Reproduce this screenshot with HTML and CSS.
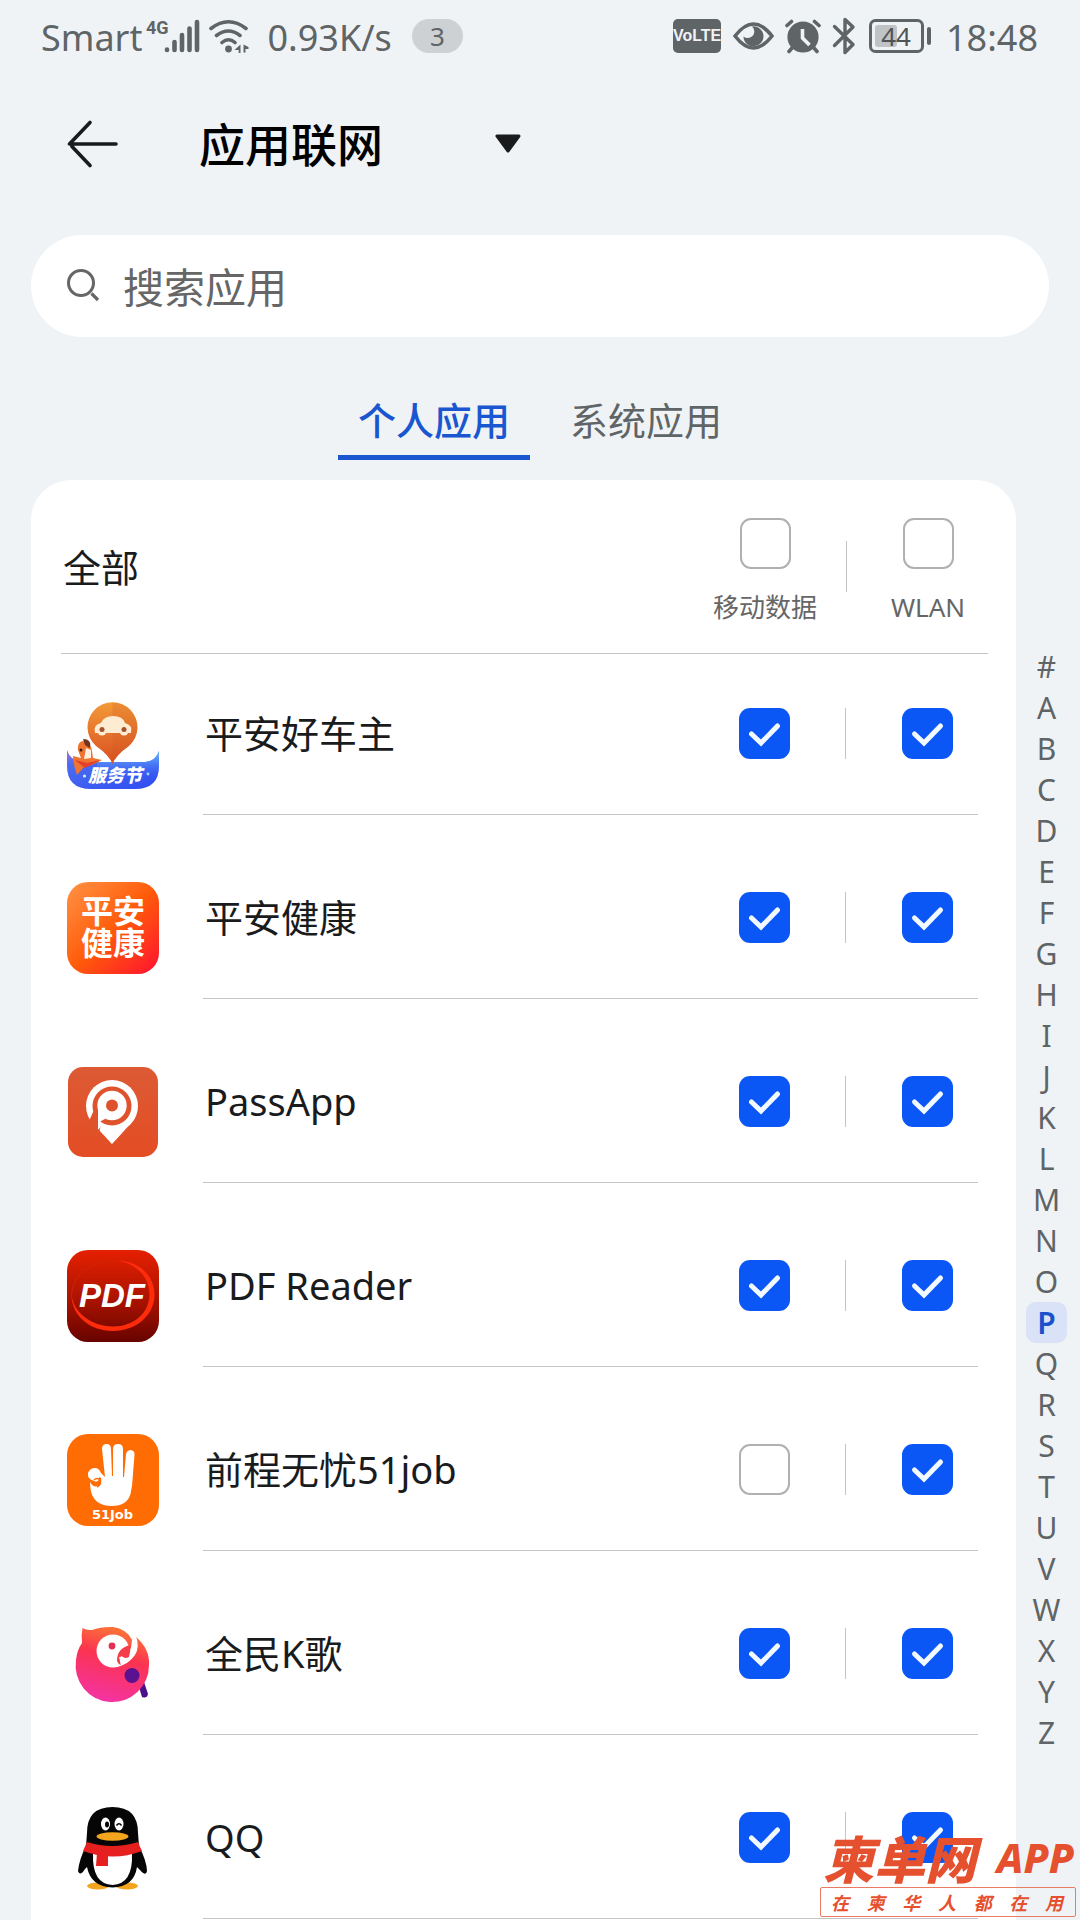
FILE: index.html
```html
<!DOCTYPE html>
<html lang="zh-CN">
<head>
<meta charset="utf-8">
<meta name="viewport" content="width=device-width, initial-scale=1">
<title>应用联网</title>
<link rel="stylesheet" href="styles.css">
</head>
<body>
<div class="page">
  <div class="status">
    <span class="carrier">Smart</span>
    <svg class="signal" width="54" height="36" viewBox="0 0 54 36" aria-hidden="true">
      <text x="0" y="16" class="net-type">4G</text>
      <g stroke="#5f6466" stroke-width="4.6" stroke-linecap="round">
        <path d="M21 31.5v0.4M28.500 24v8M36 17v15M43.500 10.500v21.500M51 4v28"/>
      </g>
    </svg>
    <svg class="wifi" width="40" height="36" viewBox="0 0 40 36" aria-hidden="true">
      <g fill="none" stroke="#5f6466" stroke-width="3.6" stroke-linecap="round">
        <path d="M2 10.500Q19.500-3 37 10.500M7.500 17.500Q19.500 8.500 31 17.500M13 24.500Q19.500 19 26 24.500"/>
      </g>
      <circle cx="19.500" cy="31" r="3.400" fill="#5f6466"/>
      <path d="M31.500 26.500v8.500h-1.800v-3h-4.200zM34.500 34.500v-8l5 2.500v2h-3v3.500z" fill="#5f6466"/>
    </svg>
    <span class="speed">0.93K/s</span>
    <span class="count">3</span>
    <span class="spacer"></span>
    <span class="volte">VoLTE</span>
    <svg class="eye" width="41" height="34" viewBox="0 0 41 34" aria-hidden="true">
      <path d="M2 17Q20.500-7 39 17Q20.500 41 2 17Z" fill="none" stroke="#5f6466" stroke-width="3.600"/>
      <path d="M19 7.500a10 10 0 1 1-8.500 10a5 5 0 1 0 8.500-10z" fill="#5f6466"/>
    </svg>
    <svg class="alarm" width="36" height="36" viewBox="0 0 36 36" aria-hidden="true">
      <circle cx="18" cy="19" r="15.600" fill="#5f6466"/>
      <path d="M2 7.500L6.500 3.500M34 7.500L29.500 3.500M7 30l-3 3.500M29 30l3 3.500" stroke="#5f6466" stroke-width="3.600" stroke-linecap="round"/>
      <path d="M17.500 11v9l7 7" fill="none" stroke="#eff3f6" stroke-width="3.600"/>
    </svg>
    <svg class="bluetooth" width="24" height="38" viewBox="0 0 24 38" aria-hidden="true">
      <path d="M2.500 9.500L21 27.500L13 35.500V2.500L21 10L2.500 28.500" fill="none" stroke="#5f6466" stroke-width="3.400" stroke-linecap="round" stroke-linejoin="round"/>
    </svg>
    <svg class="battery" width="63" height="34" viewBox="0 0 63 34" aria-hidden="true">
      <rect x="1.500" y="1.500" width="52" height="31" rx="5" fill="none" stroke="#5f6466" stroke-width="3"/>
      <rect x="6" y="6" width="22" height="22" rx="3" fill="#bfc3c5"/>
      <rect x="58" y="8" width="4" height="18" rx="2" fill="#5f6466"/>
      <text x="27" y="26.500" class="level">44</text>
    </svg>
    <span class="clock">18:48</span>
  </div>

  <header class="topbar">
    <button class="back" type="button" aria-label="返回">
      <svg width="52" height="48" viewBox="0 0 52 48" aria-hidden="true">
        <path d="M23 2.500L2.500 24H49M5 26.500L23 45.500" fill="none" stroke="#191b1c" stroke-width="3.600" stroke-linecap="round" stroke-linejoin="round"/>
      </svg>
    </button>
    <label class="picker">
      <select class="picker-select" aria-label="页面"><option>应用联网</option></select>
      <svg class="picker-arrow" width="26" height="20" viewBox="0 0 26 20" aria-hidden="true">
        <path d="M2 2H24L13 17Z" fill="#191b1c" stroke="#191b1c" stroke-width="3" stroke-linejoin="round"/>
      </svg>
    </label>
  </header>

  <label class="search">
    <svg width="36" height="36" viewBox="0 0 36 36" aria-hidden="true">
      <circle cx="15" cy="15" r="12.500" fill="none" stroke="#666" stroke-width="3"/>
      <path d="M25.500 25.500L32 32" stroke="#666" stroke-width="3.200"/>
    </svg>
    <input class="search-input" type="search" placeholder="搜索应用" aria-label="搜索应用">
  </label>

  <nav class="tabs">
    <a class="tab tab-on" href="#personal" aria-current="page">个人应用</a>
    <a class="tab" href="#system">系统应用</a>
  </nav>

  <main class="content">
    <section class="card" id="personal">
      <div class="card-head">
        <h2 class="all">全部</h2>
        <label class="all-pick"><input class="box" type="checkbox">移动数据</label>
        <span class="rule"></span>
        <label class="all-pick"><input class="box" type="checkbox">WLAN</label>
      </div>
      <ul class="apps">
        <li class="app">
          <svg class="app-icon" viewBox="0 0 92 92" aria-hidden="true">
            <defs>
              <linearGradient id="pin" x1="0" y1="0" x2="0" y2="1"><stop offset="0" stop-color="#f39a38"/><stop offset="1" stop-color="#d94f22"/></linearGradient>
              <linearGradient id="banner" x1="0" y1="0" x2="1" y2="1"><stop offset="0" stop-color="#b06bd8"/><stop offset=".2" stop-color="#4b6cf0"/><stop offset="1" stop-color="#2e4cf2"/></linearGradient>
              <linearGradient id="shine" x1="0" y1="0" x2="0" y2="1"><stop offset="0" stop-color="#6fc0fb"/><stop offset=".7" stop-color="#3f6ff5" stop-opacity="0"/></linearGradient>
            </defs>
            <path d="M0 52Q3 62 14 64H78Q89 63 92 53V68Q92 91 68 91H24Q0 91 0 68Z" fill="url(#banner)"/>
            <path d="M30 64H78Q89 63 92 53V68Q92 91 68 91H30Z" fill="url(#shine)"/>
            <path d="M45.500 66Q42 57 29 48A25 25 0 1 1 62 48Q49 57 45.500 66Z" fill="url(#pin)"/>
            <path d="M45.500 4.500a25 25 0 0 1 16.500 43.500Q49 57 45.500 66Z" fill="#c94e20" opacity=".18"/>
            <path d="M28 34Q26 27 34 25Q37 18 46 18Q56 18 58 25Q66 27 64 35H28Z" fill="#fdebd2"/>
            <circle cx="35" cy="33" r="4.500" fill="#fdebd2"/><circle cx="57" cy="33" r="4.500" fill="#fdebd2"/>
            <circle cx="35" cy="31.500" r="2.500" fill="#a5512e"/><circle cx="57" cy="31.500" r="2.500" fill="#a5512e"/>
            <path d="M10 77Q6 66 6 58L14 60L11 52Q10 44 16 43Q24 44 25 53L26 60L35 62Q24 68 17 69Z" fill="#ee7430"/>
            <path d="M16 41Q25 41 23 50L18 47Z" fill="#71341f"/>
            <path d="M19 50L24 52L24 60L17 61Z" fill="#fff0e2"/>
            <circle cx="14" cy="52" r="1.500" fill="#3d1f18"/>
            <path d="M8 62L20 65L34 62L18 70Z" fill="#e43e2e"/>
            <text x="48" y="84" text-anchor="middle" class="ic-banner">服务节</text>
            <circle cx="17.500" cy="78" r="1.600" fill="#c5f3ee"/><circle cx="81" cy="76" r="1.400" fill="#9ad8ff"/>
          </svg>
          <div class="app-body"><span class="app-name">平安好车主</span><span class="pick"><input class="box" type="checkbox" checked aria-label="平安好车主 移动数据"></span><span class="rule"></span><span class="pick"><input class="box" type="checkbox" checked aria-label="平安好车主 WLAN"></span></div>
        </li>
        <li class="app">
          <svg class="app-icon" viewBox="0 0 92 92" aria-hidden="true">
            <defs><linearGradient id="health" x1="0" y1="0" x2="1" y2="1"><stop offset="0" stop-color="#ff9345"/><stop offset=".5" stop-color="#ff5c0a"/><stop offset="1" stop-color="#ff1130"/></linearGradient></defs>
            <rect width="92" height="92" rx="21" fill="url(#health)"/>
            <text x="46" y="41" text-anchor="middle" class="ic-health">平安</text>
            <text x="46" y="73" text-anchor="middle" class="ic-health">健康</text>
          </svg>
          <div class="app-body"><span class="app-name">平安健康</span><span class="pick"><input class="box" type="checkbox" checked aria-label="平安健康 移动数据"></span><span class="rule"></span><span class="pick"><input class="box" type="checkbox" checked aria-label="平安健康 WLAN"></span></div>
        </li>
        <li class="app">
          <svg class="app-icon" viewBox="0 0 92 92" aria-hidden="true">
            <defs><linearGradient id="pass" x1="0" y1="0" x2="0" y2="1"><stop offset="0" stop-color="#dc5a34"/><stop offset="1" stop-color="#e44d24"/></linearGradient></defs>
            <rect x="1" y="1" width="90" height="90" rx="15" fill="url(#pass)"/>
            <circle cx="45" cy="40" r="26" fill="#fff"/>
            <path d="M24.500 56L45 78Q60 62 68 52Z" fill="#fff"/>
            <circle cx="45" cy="40" r="19.500" fill="#df532c"/>
            <path d="M22 55L27 44L31 50V64Q33 62 34 60L30 72L20 60Z" fill="#df532c"/>
            <path d="M31 59V40H38V53L34 55Z" fill="#fff"/>
            <path d="M33 62L36 59L45 62V78Z" fill="#fff"/>
            <circle cx="45" cy="39.500" r="14.700" fill="#fff"/>
            <circle cx="45" cy="39.500" r="6" fill="#df532c"/>
          </svg>
          <div class="app-body"><span class="app-name">PassApp</span><span class="pick"><input class="box" type="checkbox" checked aria-label="PassApp 移动数据"></span><span class="rule"></span><span class="pick"><input class="box" type="checkbox" checked aria-label="PassApp WLAN"></span></div>
        </li>
        <li class="app">
          <svg class="app-icon" viewBox="0 0 92 92" aria-hidden="true">
            <defs><linearGradient id="pdf" x1="0" y1="0" x2="0" y2="1"><stop offset="0" stop-color="#e52000"/><stop offset=".5" stop-color="#b01400"/><stop offset="1" stop-color="#670300"/></linearGradient></defs>
            <rect width="92" height="92" rx="21" fill="url(#pdf)"/>
            <path d="M50 10.500C73 11 87.500 26 87.500 45C87.500 66 68 81 46 81C22 81 4 65 4.500 44C6 62 24 76.500 46 76.500C67 76.500 82 63 82.500 45C82.500 27 70 14 50 10.500Z" fill="#ff2c0c"/>
            <path d="M4.500 45Q6 18 40 11" fill="none" stroke="#cf2409" stroke-width="1"/>
            <text x="45" y="57" text-anchor="middle" class="ic-pdf">PDF</text>
          </svg>
          <div class="app-body"><span class="app-name">PDF Reader</span><span class="pick"><input class="box" type="checkbox" checked aria-label="PDF Reader 移动数据"></span><span class="rule"></span><span class="pick"><input class="box" type="checkbox" checked aria-label="PDF Reader WLAN"></span></div>
        </li>
        <li class="app">
          <svg class="app-icon" viewBox="0 0 92 92" aria-hidden="true">
            <rect width="92" height="92" rx="21" fill="#ff6c03"/>
            <path d="M35 15Q35 10 39.500 10Q44 10 44 15L45 42H46V15Q46 10 51 10Q56 10 56 15L56 43H57L59 20Q60 16 64 16Q68 17 67.500 21L65 52Q64 57 63.500 60Q60 72 45 72Q26 72 23.500 55L23 48Q27 55 32 51Q35 48 34 44L32 43Q32 49 27 47Q20 45 21 39Q23 34 28 34Q32 34 34 39L38 43Z" fill="#fff"/>
            <path d="M27 46Q30 43 33 46Q35 50 30 53" fill="none" stroke="#ff6c03" stroke-width="1.600"/>
            <text x="45.500" y="85" text-anchor="middle" class="ic-job">51Job</text>
          </svg>
          <div class="app-body"><span class="app-name">前程无忧51job</span><span class="pick"><input class="box" type="checkbox" aria-label="前程无忧51job 移动数据"></span><span class="rule"></span><span class="pick"><input class="box" type="checkbox" checked aria-label="前程无忧51job WLAN"></span></div>
        </li>
        <li class="app">
          <svg class="app-icon" viewBox="0 0 92 92" aria-hidden="true">
            <defs><linearGradient id="bird" x1=".65" y1="0" x2=".4" y2="1"><stop offset="0" stop-color="#fb7a34"/><stop offset=".4" stop-color="#fb3350"/><stop offset="1" stop-color="#f433a4"/></linearGradient></defs>
            <path d="M71 66L77 64L81 76Q80 81 75 79Z" fill="#4b1188"/>
            <path d="M15.500 10Q19 12.500 25 12Q34 8.500 46 9Q60 11 65 22L69 19Q83 31 82 47A36.700 36.700 0 1 1 9 42Q10 32 15 25Q14 17 15.500 10Z" fill="url(#bird)"/>
            <circle cx="46" cy="33" r="16.500" fill="#fff"/>
            <path d="M65 22L69 18Q73 29 68 37Q62 46 50 49L46 45Q60 38 64 30Z" fill="#fff"/>
            <path d="M63 27Q50 30 50 43Q51 46 54 47L52 39Q59 41 62 39Q64 33 63 27Z" fill="#f43e49"/>
            <path d="M54 47Q52 41 54 38L62 42Q59 46 54 47Z" fill="#fff"/>
            <circle cx="45" cy="28" r="3.400" fill="#e32f55"/>
            <circle cx="65" cy="57.500" r="7.500" fill="#5a1290"/>
          </svg>
          <div class="app-body"><span class="app-name">全民K歌</span><span class="pick"><input class="box" type="checkbox" checked aria-label="全民K歌 移动数据"></span><span class="rule"></span><span class="pick"><input class="box" type="checkbox" checked aria-label="全民K歌 WLAN"></span></div>
        </li>
        <li class="app">
          <svg class="app-icon" viewBox="0 0 92 92" aria-hidden="true">
            <ellipse cx="31" cy="84" rx="11" ry="3.500" fill="#f2a51d"/><ellipse cx="60" cy="84" rx="11" ry="3.500" fill="#f2a51d"/>
            <path d="M20 31Q20 5 45.500 5Q71 5 71 31L72 44Q80 60 80 69Q79 75 73 68L70 65Q67 85 45.500 85.500Q24 85 20 65L18 67Q13 75 11 69Q12 58 19 44Z" fill="#060606"/>
            <path d="M26 52H65Q66 82 45.500 83Q25 82 26 52Z" fill="#fff"/>
            <path d="M20 40Q45 48 71 40Q73 45 75 49Q46 60 16 49Z" fill="#e6201f"/>
            <path d="M30 51H41V64H29Z" fill="#e6201f"/>
            <ellipse cx="38.500" cy="22" rx="4.500" ry="6.500" fill="#fff"/><ellipse cx="52" cy="22" rx="4.500" ry="6.500" fill="#fff"/>
            <ellipse cx="40" cy="22.500" rx="2" ry="3" fill="#060606"/>
            <path d="M49.500 23.500Q52 20 54.500 23.500" fill="none" stroke="#060606" stroke-width="1.600"/>
            <ellipse cx="45.500" cy="34.500" rx="16" ry="4.200" fill="#f2a51d"/>
          </svg>
          <div class="app-body"><span class="app-name">QQ</span><span class="pick"><input class="box" type="checkbox" checked aria-label="QQ 移动数据"></span><span class="rule"></span><span class="pick"><input class="box" type="checkbox" checked aria-label="QQ WLAN"></span></div>
        </li>
      </ul>
    </section>
    <nav class="index" aria-label="字母索引">
      <a href="#">#</a><a href="#A">A</a><a href="#B">B</a><a href="#C">C</a><a href="#D">D</a><a href="#E">E</a><a href="#F">F</a><a href="#G">G</a><a href="#H">H</a><a href="#I">I</a><a href="#J">J</a><a href="#K">K</a><a href="#L">L</a><a href="#M">M</a><a href="#N">N</a><a href="#O">O</a><a class="index-on" href="#P">P</a><a href="#Q">Q</a><a href="#R">R</a><a href="#S">S</a><a href="#T">T</a><a href="#U">U</a><a href="#V">V</a><a href="#W">W</a><a href="#X">X</a><a href="#Y">Y</a><a href="#Z">Z</a>
    </nav>
  </main>

  <div class="mark">
    <div class="mark-name"><span class="mark-cn">柬单网</span><span class="mark-app">APP</span></div>
    <div class="mark-line"><span>在</span><span>柬</span><span>华</span><span>人</span><span>都</span><span>在</span><span>用</span></div>
  </div>
</div>
</body>
</html>
```
FILE: styles.css
```css
* {
  box-sizing: border-box;
}

body {
  margin: 0;
  background: #eff3f6;
  color: #191b1c;
  font-family: "Noto Sans", "Noto Sans CJK SC", sans-serif;
  font-size: 38px;
}

a {
  color: inherit;
  text-decoration: none;
}

.page {
  position: relative;
  display: flex;
  flex-direction: column;
  min-height: 100vh;
}

/* Status bar */
.status {
  display: flex;
  align-items: center;
  height: 72px;
  padding: 0 42px 0 41px;
  color: #5f6466;
  font-size: 36px;
  line-height: 72px;
}

.carrier,
.speed,
.clock {
  padding-top: 3px;
}

.signal {
  margin-left: 4px;
}

.wifi {
  margin-left: 9px;
}

.net-type {
  fill: #5f6466;
  font: 700 18px "Roboto", sans-serif;
}

.speed {
  margin-left: 18px;
}

.count {
  width: 51px;
  height: 34px;
  margin-left: 20px;
  border-radius: 17px;
  background: #cdd1d4;
  font-size: 26px;
  line-height: 34px;
  text-align: center;
}

.spacer {
  flex: 1;
}

.volte {
  width: 48px;
  height: 34px;
  border-radius: 5px;
  background: #5f6466;
  color: #eff3f6;
  font: 700 16px/34px "Liberation Sans", sans-serif;
  text-align: center;
}

.eye {
  margin-left: 12px;
}

.alarm {
  margin-left: 11px;
}

.bluetooth {
  margin-left: 11px;
}

.battery {
  margin-left: 13px;
}

.level {
  fill: #4f5355;
  font-size: 26px;
  text-anchor: middle;
}

.clock {
  margin-left: 14px;
}

/* Title bar */
.topbar {
  display: flex;
  align-items: center;
  height: 144px;
  padding: 0 67px;
}

.back {
  display: flex;
  padding: 0;
  border: 0;
  background: none;
}

.picker {
  display: grid;
  grid-template-columns: 322px;
  align-items: center;
  margin-left: 80px;
}

.picker-select {
  grid-area: 1 / 1;
  width: 100%;
  height: 64px;
  padding: 0 0 4px;
  border: 0;
  appearance: none;
  background: none;
  color: #000;
  font: 500 46px/60px "Noto Sans CJK SC", sans-serif;
}

.picker-arrow {
  grid-area: 1 / 1;
  justify-self: end;
  pointer-events: none;
}

/* Search */
.search {
  display: flex;
  align-items: center;
  gap: 21px;
  height: 102px;
  margin: 19px 31px 0;
  padding: 0 35px;
  border-radius: 51px;
  background: #fff;
}

.search-input {
  flex: 1;
  min-width: 0;
  padding: 0 0 2px;
  border: 0;
  outline: 0;
  background: none;
  color: #191b1c;
  font: 400 41px/60px "Noto Sans CJK SC", sans-serif;
}

.search-input::placeholder {
  color: #666;
  opacity: 1;
}

/* Tabs */
.tabs {
  display: flex;
  justify-content: center;
  gap: 20px;
  margin: 43px 0 20px;
  color: #5f6466;
}

.tab {
  height: 80px;
  padding: 0 20px;
  line-height: 80px;
}

.tab-on {
  border-bottom: 5px solid #1a56d0;
  color: #1a56d0;
  font-weight: 500;
}

/* List */
.content {
  display: flex;
  flex: 1;
  margin-left: 31px;
}

.card {
  flex: 1;
  min-width: 0;
  padding: 0 38px 0 30px;
  border-radius: 40px 40px 0 0;
  background: #fff;
}

.card-head {
  display: flex;
  align-items: center;
  height: 174px;
  margin-right: -10px;
  padding-right: 10px;
  border-bottom: 1px solid #c4c4c4;
}

.all {
  flex: 1;
  margin: 0;
  padding-left: 2px;
  font-size: 38px;
  font-weight: 400;
  line-height: 52px;
}

.all-pick {
  display: flex;
  flex-direction: column;
  align-items: center;
  gap: 20px;
  width: 100px;
  padding-top: 9px;
  color: #666;
  font-size: 26px;
  line-height: 36px;
  white-space: nowrap;
}

.rule {
  width: 1px;
  height: 51px;
  margin: 0 31px;
  background: #c4c4c4;
}

.box {
  flex: none;
  width: 51px;
  height: 51px;
  margin: 0;
  border: 2px solid #b0b0b0;
  border-radius: 11px;
  appearance: none;
  background: #fff;
}

.box:checked {
  border: 0;
  background: #0b57f5 url("data:image/svg+xml,%3Csvg xmlns='http://www.w3.org/2000/svg' viewBox='0 0 51 51'%3E%3Cpath d='M12.500 26L22 35L38.500 18' fill='none' stroke='%23f2f9ff' stroke-width='5' stroke-linecap='round'/%3E%3C/svg%3E");
}

.apps {
  margin: 0;
  padding: 0;
  list-style: none;
}

.app {
  display: flex;
  align-items: flex-end;
  gap: 44px;
}

.app-icon {
  flex: none;
  width: 92px;
  height: 92px;
  margin: 0 0 25px 6px;
}

.app-body {
  display: flex;
  flex: 1;
  align-items: center;
  height: 184px;
  padding: 76px 1px 55px 0;
  border-bottom: 1px solid #c4c4c4;
}

.app:first-child .app-body {
  height: 161px;
  padding-top: 53px;
}

.app-name {
  flex: 1;
  padding-left: 2px;
  line-height: 52px;
}

.pick {
  display: flex;
  justify-content: center;
  width: 100px;
}

/* Text inside app icons */
.ic-banner {
  fill: #fff;
  font: italic 900 18px "Noto Sans CJK SC", sans-serif;
}

.ic-health {
  fill: #fff;
  font: 700 32px "Noto Sans CJK SC", sans-serif;
}

.ic-pdf {
  fill: #fff;
  font: italic 700 33px "Liberation Sans", sans-serif;
}

.ic-job {
  fill: #fff;
  font: 700 13px "DejaVu Sans", sans-serif;
}

/* Letter index */
.index {
  width: 64px;
  padding: 166px 13px 0 10px;
  color: #5f6466;
  font-size: 30px;
  line-height: 41px;
  text-align: center;
}

.index a {
  display: block;
}

.index .index-on {
  border-radius: 10px;
  background: #d9e2f6;
  color: #1a50cc;
  font-weight: 600;
}

/* Corner mark lying over the list */
.mark {
  position: absolute;
  right: 4px;
  bottom: 3px;
  width: 256px;
  color: #e5502f;
  font-style: italic;
}

.mark-name {
  display: flex;
  align-items: center;
  justify-content: space-between;
  height: 60px;
  padding: 0 2px 0 3px;
}

.mark-cn {
  font: italic 900 51px/58px "Noto Sans CJK SC", sans-serif;
}

.mark-app {
  font-size: 41px;
  font-weight: 800;
  line-height: 58px;
}

.mark-line {
  display: flex;
  justify-content: space-between;
  height: 30px;
  padding: 0 12px 0 10px;
  border: 1px solid #ea7a62;
  border-radius: 2px;
  font: italic 700 18px/28px "Noto Sans CJK SC", sans-serif;
}
```
